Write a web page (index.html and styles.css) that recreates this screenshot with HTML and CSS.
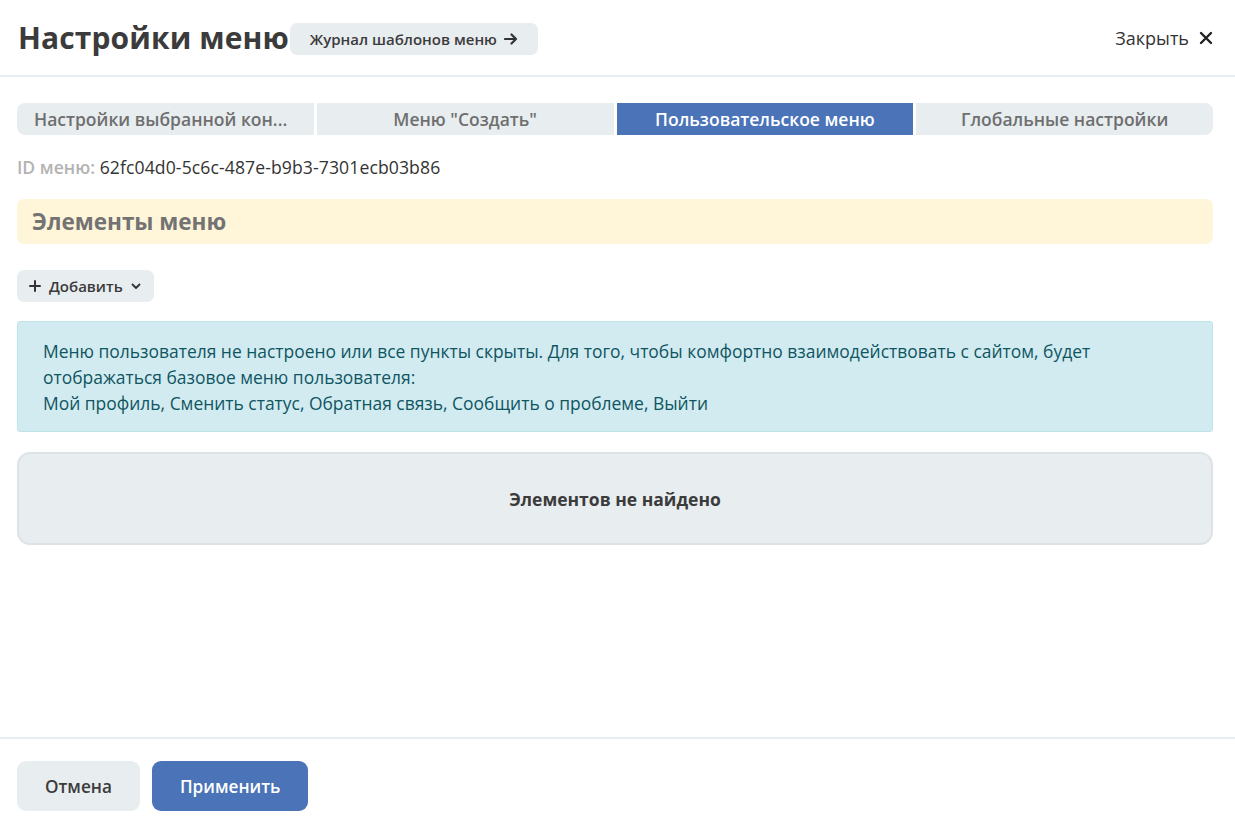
FILE: index.html
```html
<!DOCTYPE html>
<html lang="ru">
<head>
<meta charset="utf-8">
<link rel="stylesheet" href="styles.css">
</head>
<body>
<div class="modal">
  <header class="head">
    <div class="head-left">
      <h1 class="title">Настройки меню</h1>
      <button class="journal">Журнал шаблонов меню
        <svg class="arrow" width="14" height="12" viewBox="0 0 14 12"><path d="M1 6h11M7.5 1.5L12 6l-4.5 4.5" fill="none" stroke="#333" stroke-width="2.2" stroke-linecap="round" stroke-linejoin="round"/></svg>
      </button>
    </div>
    <button class="close">Закрыть
      <svg width="14" height="14" viewBox="0 0 14 14"><path d="M2 2l10 10M12 2L2 12" stroke="#222" stroke-width="2.4" stroke-linecap="round"/></svg>
    </button>
  </header>
  <main class="body">
    <nav class="tabs">
      <div class="tab first">Настройки выбранной кон...</div>
      <div class="tab">Меню "Создать"</div>
      <div class="tab active">Пользовательское меню</div>
      <div class="tab">Глобальные настройки</div>
    </nav>
    <div class="id-row"><span class="id-label">ID меню:</span> <span class="id-val">62fc04d0-5c6c-487e-b9b3-7301ecb03b86</span></div>
    <div class="section">Элементы меню</div>
    <button class="add">
      <svg width="12" height="12" viewBox="0 0 12 12"><path d="M6 1v10M1 6h10" stroke="#333" stroke-width="2" stroke-linecap="round"/></svg>
      <span>Добавить</span>
      <svg width="10" height="7" viewBox="0 0 10 7"><path d="M1.5 1.5L5 5l3.5-3.5" fill="none" stroke="#333" stroke-width="1.8" stroke-linecap="round" stroke-linejoin="round"/></svg>
    </button>
    <div class="info">Меню пользователя не настроено или все пункты скрыты. Для того, чтобы комфортно взаимодействовать с сайтом, будет отображаться базовое меню пользователя:<br>Мой профиль, Сменить статус, Обратная связь, Сообщить о проблеме, Выйти</div>
    <div class="empty">Элементов не найдено</div>
  </main>
  <footer class="foot">
    <button class="btn cancel">Отмена</button>
    <button class="btn apply">Применить</button>
  </footer>
</div>
</body>
</html>
```
FILE: styles.css
```css
* { box-sizing: border-box; }
html, body { margin: 0; padding: 0; background: #fff; }
body { font-family: "Open Sans", "Noto Sans", sans-serif; color: #333; width: 1235px; height: 825px; overflow: hidden; }
button { font-family: inherit; border: none; cursor: pointer; }
.modal { display: flex; flex-direction: column; height: 825px; }
.head { height: 77px; border-bottom: 2px solid #e8edf1; display: flex; align-items: center; justify-content: space-between; padding: 0 22px 0 18px; flex-shrink: 0; }
.head-left { display: flex; align-items: center; }
.title { margin: 0; font-size: 30px; font-weight: 700; color: #3b3b3b; letter-spacing: 0.1px; line-height: 40px; }
.journal { margin-left: 1px; height: 32px; padding: 0 20px; background: #e8edf0; border-radius: 7px; font-size: 15px; font-weight: 600; color: #3b3b3b; display: flex; align-items: center; gap: 7px; margin-top: 2px; }
.close { background: none; display: flex; align-items: center; gap: 10px; font-size: 18px; color: #333; padding: 0; margin-top: 1px; }
.body { flex: 1; padding: 26px 22px 0 17px; display: flex; flex-direction: column; }
.tabs { display: grid; grid-template-columns: repeat(4, 1fr); gap: 3px; height: 32px; }
.tab { min-width: 0; background: #e8edf0; color: #6f6f6f; font-size: 17.5px; font-weight: 600; display: flex; align-items: center; justify-content: center; white-space: nowrap; overflow: hidden; }
.tab.first { justify-content: flex-start; padding-left: 17px; border-radius: 8px 0 0 8px; }
.tab:last-child { border-radius: 0 8px 8px 0; }
.tab.active { background: #4a73b8; color: #fff; }
.id-row { margin-top: 20px; font-size: 17.6px; line-height: 24px; font-weight: 500; }
.id-label { color: #b3b3b3; font-weight: 600; }
.id-val { color: #333; letter-spacing: 0.1px; }
.section { margin-top: 20px; height: 45px; background: #fff5d8; border-radius: 7px; padding-left: 15px; display: flex; align-items: center; font-size: 22.5px; font-weight: 700; color: #737373; }
.add { margin-top: 26px; align-self: flex-start; height: 32px; padding: 0 13px 0 12px; background: #e8edf0; border-radius: 7px; font-size: 15px; font-weight: 600; color: #3b3b3b; display: flex; align-items: center; gap: 8px; }
.info { margin-top: 19px; background: #d2ebf0; border: 1px solid #bee3ea; border-radius: 3px; padding: 16px 24px 15px 25px; font-size: 17.45px; line-height: 26px; color: #0f5562; }
.empty { margin-top: 20px; height: 93px; background: #e8edf0; border: 2px solid #dde2e6; border-radius: 13px; display: flex; align-items: center; justify-content: center; font-size: 17.5px; font-weight: 700; color: #3b3b3b; }
.foot { height: 88px; border-top: 2px solid #e8edf1; flex-shrink: 0; padding: 22px 17px 0; display: flex; gap: 12px; }
.btn { height: 50px; border-radius: 9px; font-size: 17.2px; font-weight: 600; padding: 0 28px; }
.cancel { background: #e8edf0; color: #3b3b3b; }
.apply { background: #4a73b8; color: #fff; }
```
